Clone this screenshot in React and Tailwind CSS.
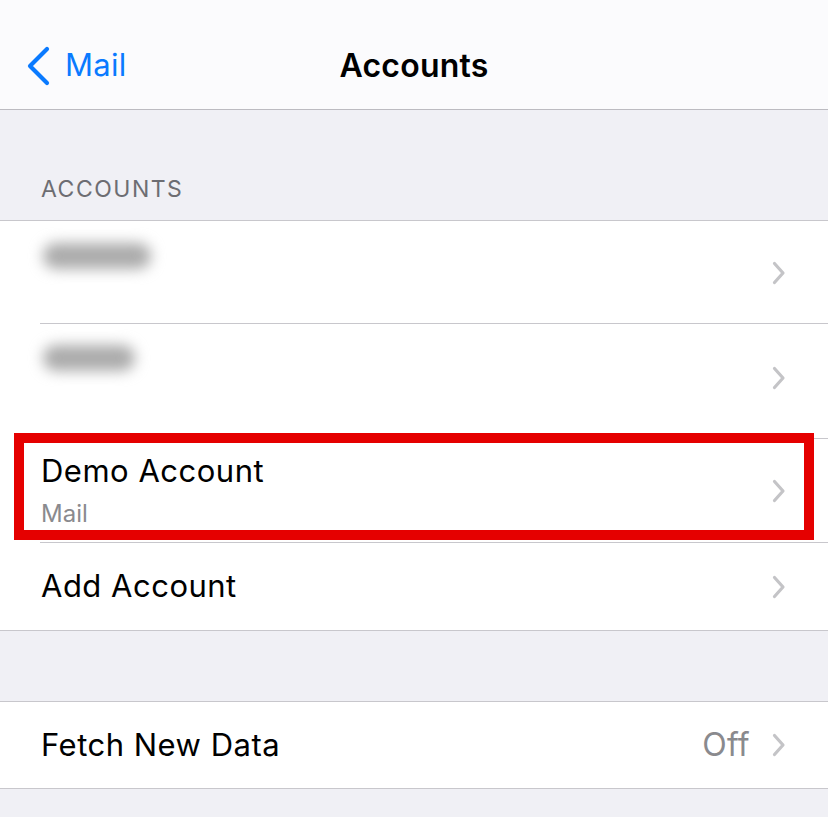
import React from "react"

function Chevron({ className = "" }) {
  return (
    <svg width="14" height="24" viewBox="0 0 14 24" className={`shrink-0 ${className}`}>
      <path d="M2.5 2.5 L11 12 L2.5 21.5" fill="none" stroke="#c4c4c7" strokeWidth="3.2" strokeLinecap="round" strokeLinejoin="round" />
    </svg>
  )
}

function Row({ children, right, height, divider = true, chevronClass = "" }) {
  return (
    <div className="relative flex items-center pl-[41px] pr-[42px] bg-white" style={{ height }}>
      <div className="flex-1 min-w-0">{children}</div>
      <div className="flex items-center gap-[22px]">
        {right}
        <Chevron className={chevronClass} />
      </div>
      {divider && <div className="absolute bottom-0 left-[40px] right-0 h-px bg-[#c8c7cc]" />}
    </div>
  )
}

export default function App() {
  return (
    <div className="w-[828px] h-[817px] bg-[#f0f0f5] overflow-hidden" style={{ fontFamily: "Inter, 'Noto Sans', sans-serif" }}>
      <div className="h-[110px] bg-[#fbfbfd] border-b border-[#bcbbc1] grid grid-cols-[1fr_auto_1fr] items-center pt-[22px]">
        <div className="flex items-center pl-[25px] gap-[14px] text-[#0a7aff]">
          <svg width="26" height="40" viewBox="0 0 26 40">
            <path d="M22 3 L5 20 L22 37" fill="none" stroke="#0a7aff" strokeWidth="4.2" strokeLinecap="round" strokeLinejoin="round" />
          </svg>
          <span className="text-[31px] tracking-[0.3px]">Mail</span>
        </div>
        <div className="text-[32px] font-semibold text-black tracking-[0.2px]">Accounts</div>
        <div />
      </div>

      <div className="h-[110px] flex items-end pl-[41px] pb-[14px]">
        <span className="text-[23px] text-[#6d6d72] tracking-[1.5px]">ACCOUNTS</span>
      </div>

      <div className="border-t border-[#c8c7cc] bg-white">
        <Row height={103}>
          <div className="w-[108px] h-[26px] ml-[2px] rounded-full bg-[#ababab] blur-[7px] -translate-y-[17px]" />
        </Row>
        <Row height={115} chevronClass="-translate-y-[4px]">
          <div className="w-[92px] h-[26px] ml-[2px] rounded-full bg-[#ababab] blur-[7px] -translate-y-[24px]" />
        </Row>
        <Row height={104}>
          <div className="flex flex-col -mt-[2px]">
            <span className="text-[31px] text-black leading-[38px] tracking-[0.5px]">Demo Account</span>
            <span className="text-[24px] text-[#8a8a8e] leading-[30px] mt-[9px]">Mail</span>
          </div>
          <div className="absolute left-[14px] right-[14px] top-[-6px] bottom-[3px] border-[10px] border-[#e50000] pointer-events-none" />
        </Row>
        <Row height={87} divider={false}>
          <span className="text-[31px] text-black tracking-[0.5px]">Add Account</span>
        </Row>
      </div>
      <div className="h-px bg-[#c8c7cc]" />

      <div className="h-[70px]" />

      <div className="border-y border-[#c8c7cc] bg-white">
        <Row height={86} divider={false} right={<span className="text-[32px] text-[#8a8a8e] tracking-[0.3px]">Off</span>}>
          <span className="text-[31px] text-black tracking-[0.5px]">Fetch New Data</span>
        </Row>
      </div>
    </div>
  )
}
